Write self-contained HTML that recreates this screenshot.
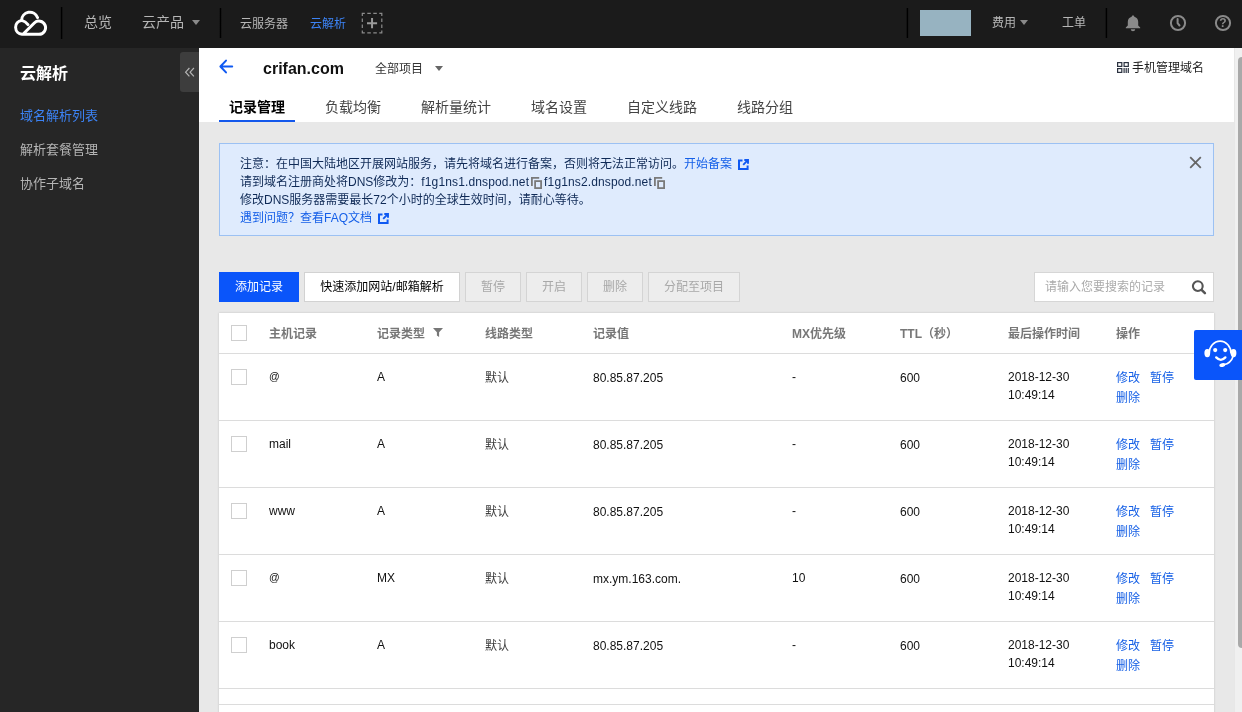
<!DOCTYPE html>
<html lang="zh-CN">
<head>
<meta charset="utf-8">
<title>云解析 - crifan.com</title>
<style>
*{box-sizing:border-box;margin:0;padding:0}
html,body{width:1242px;height:712px;overflow:hidden}
body{position:relative;background:#e8e8e8;font-family:"Liberation Sans","Noto Sans CJK SC",sans-serif;font-size:12px;color:#1a1a1a;-webkit-font-smoothing:antialiased}
a{text-decoration:none;color:#1b63e8}
.abs{position:absolute}
body>*{will-change:transform}
/* top bar */
#top{position:absolute;left:0;top:0;width:1242px;height:48px;background:#1b1b1b;color:#b6b6b6}
#top .t{position:absolute;top:0;height:44px;line-height:44px;white-space:nowrap}
#top .t.s{top:2px}
#top .t.b{top:1px}
#top .div{position:absolute;width:2px;background:#0a0a0a}
/* sidebar */
#side{position:absolute;left:0;top:48px;width:199px;height:664px;background:#262626}
#side h2{position:absolute;left:20px;top:14px;font-size:16px;line-height:24px;font-weight:bold;color:#fff}
#side .m{position:absolute;left:20px;font-size:13px;line-height:20px;color:#b4b4b4;white-space:nowrap}
#side .m.on{color:#3c83f5}
#tog{position:absolute;left:180px;top:4px;width:19px;height:40px;background:#3d3d3d;border-radius:3px 0 0 3px;color:#b0b0b0}
/* main header */
#mh{position:absolute;left:199px;top:48px;width:1035px;height:74px;background:#fff}
#mh .tab{position:absolute;top:49px;height:25px;font-size:14px;line-height:20px;color:#444;white-space:nowrap;padding:0 10px}
#mh .tab.on{color:#000;font-weight:bold;border-bottom:2px solid #1458ec}
/* notice */
#note{position:absolute;left:219px;top:143px;width:995px;height:93px;background:#dfebfd;border:1px solid #9cc1f3;font-size:12px;line-height:18px;color:#0f2a56;padding:11px 20px}
#note a{color:#145fe8}
#note .dn{letter-spacing:.13px}
/* toolbar */
.btn{position:absolute;top:272px;height:30px;line-height:28px;text-align:center;font-size:12px;border:1px solid #d2d2d2;background:#fff;color:#000;white-space:nowrap}
.btn.pri{background:#0a55fa;border-color:#0a55fa;color:#fff}
.btn.dis{background:#ededed;border-color:#d4d4d4;color:#a8a8a8}
#search{position:absolute;left:1034px;top:272px;width:180px;height:30px;background:#fff;border:1px solid #d6d6d6;color:#aaa;line-height:28px;padding-left:10px}
/* table */
#tbl{position:absolute;left:219px;top:313px;width:995px;height:420px;background:#fff;box-shadow:0 0 2px rgba(0,0,0,.18)}
#tbl .hl{position:absolute;left:0;width:995px;height:1px;background:#dcdcdc}
#tbl .c{position:absolute;white-space:nowrap;line-height:18px;font-size:12px;color:#111}
#tbl .h{font-weight:bold;color:#777}
#tbl .cb{position:absolute;left:12px;width:16px;height:16px;border:1px solid #cfcfcf;background:#fff}
#tbl a{color:#1660e6}
</style>
</head>
<body>

<!-- TOP BAR -->
<div id="top">
  <svg class="abs" style="left:13px;top:10px" width="35" height="27" viewBox="0 0 35 27" fill="none" stroke="#fff" stroke-width="3" stroke-linecap="round" stroke-linejoin="round">
    <path d="M24.5 7.6 A8.2 8.2 0 0 0 8.6 10.4 A7 7 0 0 0 9 24.3 L26 24.3 A6.6 6.6 0 1 0 21.3 13 L10.2 24"/>
    <path d="M8.6 10.4 Q12.5 11.3 15 14.6"/>
  </svg>
  <div class="abs" style="left:60px;top:7px;width:3px;height:32px;background:linear-gradient(90deg,rgba(0,0,0,0.15) 0 1px,#000 1px 2px,rgba(0,0,0,0.35) 2px 3px)"></div>
  <div class="t" style="left:84px;font-size:14px">总览</div>
  <div class="t" style="left:142px;font-size:14px">云产品</div>
  <div class="abs" style="left:192px;top:20px;border:4px solid transparent;border-top:5px solid #8a8a8a;border-bottom:0"></div>
  <div class="abs" style="left:219px;top:8px;width:3px;height:30px;background:linear-gradient(90deg,rgba(0,0,0,0.25) 0 1px,#000 1px 2px,rgba(0,0,0,0.25) 2px 3px)"></div>
  <div class="t s" style="left:240px;font-size:12px">云服务器</div>
  <div class="t s" style="left:310px;font-size:12px;color:#3c83f5">云解析</div>
  <svg class="abs" style="left:361px;top:12px" width="22" height="22" viewBox="0 0 22 22" fill="none">
    <rect x="1.300" y="1.400" width="19.500" height="19.500" stroke="#8c8c8c" stroke-width="1.200" stroke-dasharray="5 2.500 3.500 2.500 3.500 2.500" stroke-dashoffset="2.500"/>
    <path d="M6 11.150h10.100M11.050 6.100v10.100" stroke="#9a9a9a" stroke-width="2"/>
  </svg>
  <div class="abs" style="left:906px;top:8px;width:3px;height:30px;background:linear-gradient(90deg,rgba(0,0,0,0.35) 0 1px,#000 1px 2px,rgba(0,0,0,0.15) 2px 3px)"></div>
  <div class="abs" style="left:920px;top:10px;width:51px;height:26px;background:#97b3c1"></div>
  <div class="t b" style="left:992px;font-size:12px">费用</div>
  <div class="abs" style="left:1020px;top:20px;border:4px solid transparent;border-top:5px solid #8a8a8a;border-bottom:0"></div>
  <div class="t b" style="left:1062px;font-size:12px">工单</div>
  <div class="abs" style="left:1105px;top:8px;width:3px;height:30px;background:linear-gradient(90deg,rgba(0,0,0,0.35) 0 1px,#000 1px 2px,rgba(0,0,0,0.15) 2px 3px)"></div>
  <!-- bell -->
  <svg class="abs" style="left:1125px;top:14.600px" width="16" height="17" viewBox="0 0 16 17" fill="#8a8a8a">
    <path d="M8 0.6c.8 0 1.3.5 1.3 1.2 2.4.6 3.9 2.500 3.900 5v3.600l2 2.200v.6H.8v-.6l2-2.200V6.800c0-2.500 1.500-4.400 3.900-5C6.700 1.100 7.200.6 8 .6z"/>
    <path d="M5.800 14.300h4.400c0 1.200-1 2-2.200 2s-2.200-.8-2.200-2z"/>
  </svg>
  <!-- clock -->
  <svg class="abs" style="left:1169px;top:14px" width="18" height="18" viewBox="0 0 18 18" fill="none" stroke="#8a8a8a">
    <circle cx="9" cy="9" r="7.100" stroke-width="2"/>
    <path d="M8.600 4.900v4.300l1.900 2.300" stroke-width="2" stroke-linecap="round"/>
  </svg>
  <!-- help -->
  <svg class="abs" style="left:1214px;top:14px" width="18" height="18" viewBox="0 0 18 18" fill="none">
    <circle cx="9" cy="9" r="7.100" stroke="#8a8a8a" stroke-width="2"/>
    <text x="9" y="13.300" text-anchor="middle" font-family="Liberation Sans, sans-serif" font-weight="bold" font-size="12" fill="#8a8a8a">?</text>
  </svg>
</div>

<!-- SIDEBAR -->
<div id="side">
  <h2>云解析</h2>
  <div id="tog"><svg class="abs" style="left:4px;top:14px" width="11" height="12" viewBox="0 0 11 12" fill="none" stroke="#b5b5b5" stroke-width="1.200"><path d="M5.400 2L1.600 6.200 5.400 10.400M9.900 2L6.100 6.200l3.800 4.200"/></svg></div>
  <div class="m on" style="top:58px">域名解析列表</div>
  <div class="m" style="top:92px">解析套餐管理</div>
  <div class="m" style="top:126px">协作子域名</div>
</div>

<!-- MAIN HEADER -->
<div id="mh">
  <svg class="abs" style="left:20px;top:10.600px" width="15" height="15" viewBox="0 0 15 15" fill="none" stroke="#0f59f2" stroke-width="2" stroke-linecap="round" stroke-linejoin="round"><path d="M7 1.600L1.400 7.500 7 13.400M2 7.500h11.200"/></svg>
  <div class="abs" style="left:64px;top:9.600px;font-size:16px;line-height:22px;font-weight:bold;color:#111;white-space:nowrap">crifan.com</div>
  <div class="abs" style="left:176px;top:11.600px;font-size:12px;line-height:18px;color:#333;white-space:nowrap">全部项目</div>
  <div class="abs" style="left:236px;top:17.500px;border:4px solid transparent;border-top:5px solid #666;border-bottom:0"></div>
  <svg class="abs" style="left:918px;top:14px" width="12" height="11" viewBox="0 0 12 11" fill="none" stroke="#2b3240" stroke-width="1.200"><rect x=".6" y=".6" width="4.200" height="3.800"/><rect x="7.100" y=".6" width="4.200" height="3.800"/><rect x=".6" y="6.600" width="4.200" height="3.800"/><path d="M7.100 6v5M9.200 6v5M11.300 6v5"/></svg>
  <div class="abs" style="left:933px;top:11px;font-size:12px;line-height:18px;color:#222;white-space:nowrap">手机管理域名</div>
  <div class="tab on" style="left:20px">记录管理</div>
  <div class="tab" style="left:116px">负载均衡</div>
  <div class="tab" style="left:212px">解析量统计</div>
  <div class="tab" style="left:322px">域名设置</div>
  <div class="tab" style="left:418px">自定义线路</div>
  <div class="tab" style="left:528px">线路分组</div>
</div>

<!-- NOTICE -->
<div id="note">
  注意：在中国大陆地区开展网站服务，请先将域名进行备案，否则将无法正常访问。<a>开始备案 <svg width="11" height="11" viewBox="0 0 11 11" style="vertical-align:-2px;margin-left:3px" fill="none" stroke="#0f59f2" stroke-width="2"><path d="M4.500 1.400H1v8.600h8.600V6.500"/><path d="M6.300 1h3.700v3.700M9.800 1.200L5.200 5.800" stroke-width="1.900"/></svg></a><br>
  请到域名注册商处将DNS修改为：<span class="dn">f1g1ns1.dnspod.net</span><svg width="11" height="12" viewBox="0 0 11 12" style="vertical-align:-3px;margin:0 2px 0 2px" fill="none" stroke="#7a7a7a" stroke-width="1.800"><path d="M.9 9V.9h7.300"/><rect x="4.100" y="4.100" width="6" height="7"/></svg><span class="dn">f1g1ns2.dnspod.net</span><svg width="11" height="12" viewBox="0 0 11 12" style="vertical-align:-3px;margin:0 2px 0 2px" fill="none" stroke="#7a7a7a" stroke-width="1.800"><path d="M.9 9V.9h7.300"/><rect x="4.100" y="4.100" width="6" height="7"/></svg><br>
  修改DNS服务器需要最长72个小时的全球生效时间，请耐心等待。<br>
  <a>遇到问题？查看FAQ文档 <svg width="11" height="11" viewBox="0 0 11 11" style="vertical-align:-2px;margin-left:3px" fill="none" stroke="#0f59f2" stroke-width="2"><path d="M4.500 1.400H1v8.600h8.600V6.500"/><path d="M6.300 1h3.700v3.700M9.800 1.200L5.200 5.800" stroke-width="1.900"/></svg></a>
  <svg class="abs" style="left:968.500px;top:12px" width="13" height="13" viewBox="0 0 13 13" stroke="#666" stroke-width="1.800"><path d="M1.200 1.200l10.600 10.600M11.800 1.200L1.200 11.800"/></svg>
</div>

<!-- TOOLBAR -->
<div class="btn pri" style="left:219px;width:80px">添加记录</div>
<div class="btn" style="left:304px;width:156px">快速添加网站/邮箱解析</div>
<div class="btn dis" style="left:465px;width:56px">暂停</div>
<div class="btn dis" style="left:526px;width:56px">开启</div>
<div class="btn dis" style="left:587px;width:56px">删除</div>
<div class="btn dis" style="left:648px;width:92px">分配至项目</div>
<div id="search">请输入您要搜索的记录
  <svg class="abs" style="left:156px;top:6px" width="16" height="16" viewBox="0 0 16 16" fill="none" stroke="#555" stroke-width="1.800"><circle cx="6.800" cy="7.100" r="4.900" stroke-width="2.100"/><path d="M10.600 10.900l3.300 3.300" stroke-linecap="round" stroke-width="2.500"/></svg>
</div>

<!-- TABLE -->
<div id="tbl">
  <div class="cb" style="top:12px"></div>
  <div class="c h" style="left:50px;top:12px">主机记录</div>
  <div class="c h" style="left:158px;top:12px">记录类型</div>
  <svg class="abs" style="left:214px;top:15px" width="10" height="9" viewBox="0 0 10 9" fill="#777"><path d="M0 0h10L6.100 4.200V9L3.900 7.600V4.200z"/></svg>
  <div class="c h" style="left:266px;top:12px">线路类型</div>
  <div class="c h" style="left:374px;top:12px">记录值</div>
  <div class="c h" style="left:573px;top:12px">MX优先级</div>
  <div class="c h" style="left:681px;top:12px">TTL（秒）</div>
  <div class="c h" style="left:789px;top:12px">最后操作时间</div>
  <div class="c h" style="left:897px;top:12px">操作</div>
  <div class="hl" style="top:40px"></div>
  <!-- rows inserted below -->
  <!--ROWS-->
  <div class="cb" style="top:56px"></div>
  <div class="c" style="left:50px;top:55px"><span style="font-size:10.500px;position:relative;top:-1.500px">@</span></div>
  <div class="c" style="left:158px;top:55px">A</div>
  <div class="c" style="left:266px;top:56px;color:#3d3d3d">默认</div>
  <div class="c" style="left:374px;top:56px">80.85.87.205</div>
  <div class="c" style="left:573px;top:55px">-</div>
  <div class="c" style="left:681px;top:56px">600</div>
  <div class="c" style="left:789px;top:55px">2018-12-30<br>10:49:14</div>
  <div class="c" style="left:897px;top:56px;line-height:19.5px"><a>修改</a><a style="margin-left:10px">暂停</a><br><a>删除</a></div>
  <div class="hl" style="top:107px"></div>
  <div class="cb" style="top:123px"></div>
  <div class="c" style="left:50px;top:122px">mail</div>
  <div class="c" style="left:158px;top:122px">A</div>
  <div class="c" style="left:266px;top:123px;color:#3d3d3d">默认</div>
  <div class="c" style="left:374px;top:123px">80.85.87.205</div>
  <div class="c" style="left:573px;top:122px">-</div>
  <div class="c" style="left:681px;top:123px">600</div>
  <div class="c" style="left:789px;top:122px">2018-12-30<br>10:49:14</div>
  <div class="c" style="left:897px;top:123px;line-height:19.5px"><a>修改</a><a style="margin-left:10px">暂停</a><br><a>删除</a></div>
  <div class="hl" style="top:174px"></div>
  <div class="cb" style="top:190px"></div>
  <div class="c" style="left:50px;top:189px">www</div>
  <div class="c" style="left:158px;top:189px">A</div>
  <div class="c" style="left:266px;top:190px;color:#3d3d3d">默认</div>
  <div class="c" style="left:374px;top:190px">80.85.87.205</div>
  <div class="c" style="left:573px;top:189px">-</div>
  <div class="c" style="left:681px;top:190px">600</div>
  <div class="c" style="left:789px;top:189px">2018-12-30<br>10:49:14</div>
  <div class="c" style="left:897px;top:190px;line-height:19.5px"><a>修改</a><a style="margin-left:10px">暂停</a><br><a>删除</a></div>
  <div class="hl" style="top:241px"></div>
  <div class="cb" style="top:257px"></div>
  <div class="c" style="left:50px;top:256px"><span style="font-size:10.500px;position:relative;top:-1.500px">@</span></div>
  <div class="c" style="left:158px;top:256px">MX</div>
  <div class="c" style="left:266px;top:257px;color:#3d3d3d">默认</div>
  <div class="c" style="left:374px;top:257px">mx.ym.163.com.</div>
  <div class="c" style="left:573px;top:256px">10</div>
  <div class="c" style="left:681px;top:257px">600</div>
  <div class="c" style="left:789px;top:256px">2018-12-30<br>10:49:14</div>
  <div class="c" style="left:897px;top:257px;line-height:19.5px"><a>修改</a><a style="margin-left:10px">暂停</a><br><a>删除</a></div>
  <div class="hl" style="top:308px"></div>
  <div class="cb" style="top:324px"></div>
  <div class="c" style="left:50px;top:323px">book</div>
  <div class="c" style="left:158px;top:323px">A</div>
  <div class="c" style="left:266px;top:324px;color:#3d3d3d">默认</div>
  <div class="c" style="left:374px;top:324px">80.85.87.205</div>
  <div class="c" style="left:573px;top:323px">-</div>
  <div class="c" style="left:681px;top:324px">600</div>
  <div class="c" style="left:789px;top:323px">2018-12-30<br>10:49:14</div>
  <div class="c" style="left:897px;top:324px;line-height:19.5px"><a>修改</a><a style="margin-left:10px">暂停</a><br><a>删除</a></div>
  <div class="hl" style="top:375px"></div>
  <!--/ROWS-->
  <div class="hl" style="top:391px"></div>
</div>

<!-- SCROLLBAR -->
<div class="abs" style="left:1234px;top:48px;width:8px;height:664px;background:#f0f0f0;border-left:1px solid #e7e7e7"></div>
<div class="abs" style="left:1238px;top:56.500px;width:9px;height:590.500px;background:#a9a9a9;border-radius:4px"></div>

<!-- FLOAT SUPPORT -->
<div class="abs" style="left:1194px;top:330px;width:48px;height:50px;background:#0a55fa;border-radius:2px 0 0 2px">
  <svg class="abs" style="left:8.500px;top:6.500px" width="36" height="32" viewBox="0 0 36 32" fill="none" stroke="#fff" stroke-width="1.700">
    <path d="M6.100 16.500a11 12.400 0 1 1 22 0"/>
    <ellipse cx="4.300" cy="16.100" rx="2.900" ry="4.200" fill="#fff" stroke="none"/>
    <ellipse cx="30.500" cy="16.100" rx="2.900" ry="4.200" fill="#fff" stroke="none"/>
    <circle cx="12.200" cy="13.100" r="2.100" fill="#fff" stroke="none"/>
    <circle cx="22.200" cy="13.100" r="2.100" fill="#fff" stroke="none"/>
    <path d="M13.200 20.400q4.600 4.800 9.200 0" stroke-linecap="round" stroke-width="2.300"/>
    <path d="M30 19.500q-1.800 6.600-9.400 8.300" stroke-linecap="round" stroke-width="1.600"/>
    <ellipse cx="19.300" cy="28.100" rx="3" ry="1.900" fill="#fff" stroke="none" transform="rotate(-12 19.300 28.100)"/>
  </svg>
</div>

</body>
</html>
